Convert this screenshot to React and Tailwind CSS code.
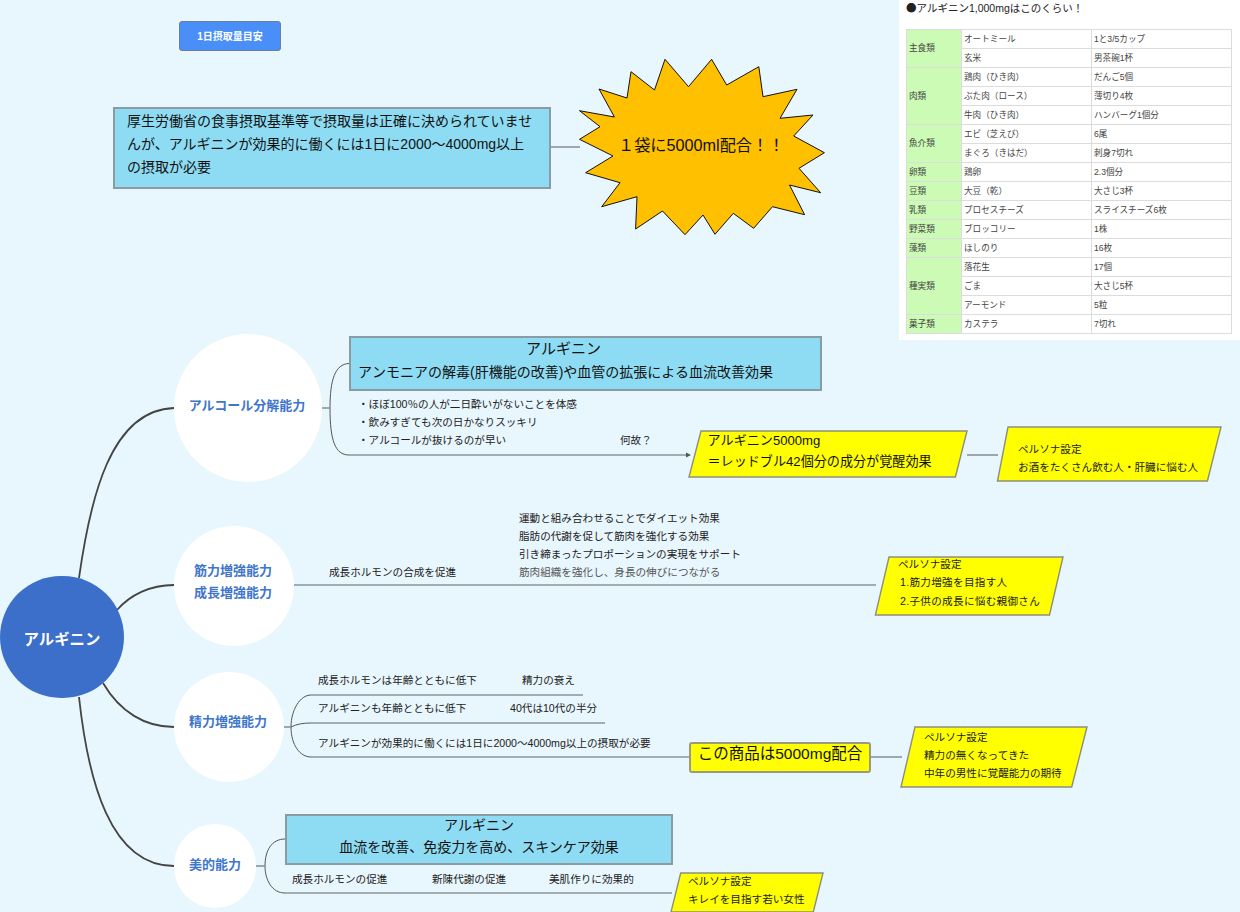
const foods = [
  ['主食類', 2, 'オートミール', '1と3/5カップ'],
  [null, 0, '玄米', '男茶碗1杯'],
  ['肉類', 3, '鶏肉（ひき肉）', 'だんご5個'],
  [null, 0, 'ぶた肉（ロース）', '薄切り4枚'],
  [null, 0, '牛肉（ひき肉）', 'ハンバーグ1個分'],
  ['魚介類', 2, 'エビ（芝えび）', '6尾'],
  [null, 0, 'まぐろ（きはだ）', '刺身7切れ'],
  ['卵類', 1, '鶏卵', '2.3個分'],
  ['豆類', 1, '大豆（乾）', '大さじ3杯'],
  ['乳類', 1, 'プロセスチーズ', 'スライスチーズ6枚'],
  ['野菜類', 1, 'ブロッコリー', '1株'],
  ['藻類', 1, 'ほしのり', '16枚'],
  ['種実類', 3, '落花生', '17個'],
  [null, 0, 'ごま', '大さじ5杯'],
  [null, 0, 'アーモンド', '5粒'],
  ['菓子類', 1, 'カステラ', '7切れ'],
];

const burst =
  '711.6,59.3 726.7,85 758.8,66.7 763,96.7 797,89.3 780,118.3 813,115 793.7,136 824.4,152.7 799,168.3 820.6,192.7 789.5,185 804.6,214.7 772.5,206.7 753.6,228.3 733.3,213.3 715,234.3 703,215 685,234.7 662.5,211 635.6,229 637,196.7 601.7,206.7 620,182.7 585.6,172.7 613,156 579.5,139.3 600,126.7 579.5,110.7 614.4,117 599,89 627,98 631,71.7 654.5,90 665,59.3 688.5,86.7';

// a stack of small text on the canvas, 18px per line
function Notes({ className, children }) {
  return (
    <div className={'absolute flex flex-col whitespace-nowrap text-[10.6px] leading-[18px] text-[#222] ' + className}>
      {children}
    </div>
  );
}

function Topic({ className, children }) {
  return (
    <div className={'absolute flex flex-col items-center justify-center rounded-full bg-white text-[13px] font-bold leading-[22px] text-[#3f76cc] ' + className}>
      {children}
    </div>
  );
}

function FoodTable() {
  return (
    <div className="absolute left-[899px] top-0 h-[340px] w-[341px] bg-white px-[7px]">
      <div className="h-[29px] pt-px text-[10.5px] leading-[14px] text-[#222]">
        <span className="font-['Noto_Sans_CJK_JP']">●</span>アルギニン1,000mgはこのくらい！
      </div>
      <table className="w-[325px] table-fixed border-collapse text-[8.6px] text-[#444]">
        <colgroup>
          <col className="w-[55px]" />
          <col className="w-[130px]" />
          <col className="w-[140px]" />
        </colgroup>
        <tbody>
          {foods.map((row) => (
            <tr key={row[2]} className="h-[19px]">
              {row[0] && (
                <td rowSpan={row[1]} className="border border-[#dcdcdc] bg-[#ccfbb5] px-[2px] py-0 leading-none">
                  {row[0]}
                </td>
              )}
              <td className="border border-[#dcdcdc] px-[2px] py-0 leading-none">{row[2]}</td>
              <td className="border border-[#dcdcdc] px-[2px] py-0 leading-none">{row[3]}</td>
            </tr>
          ))}
        </tbody>
      </table>
    </div>
  );
}

export default function App() {
  return (
    <div lang="ja" className="relative h-[912px] w-[1240px] overflow-hidden bg-[#e8f6fd] font-['Liberation_Sans','Noto_Sans_CJK_JP',sans-serif]">
      <svg className="absolute inset-0" width="1240" height="912" fill="none">
        {/* root branches */}
        <g stroke="#444" strokeWidth="1.8">
          <path d="M79 578 C90 500 110 410 174 408" />
          <path d="M117 610 C130 595 150 585 174 585" />
          <path d="M103 683 C120 712 145 727 174 727" />
          <path d="M79 697 C88 780 110 866 174 866" />
        </g>
        {/* thin brackets */}
        <g stroke="#555" strokeWidth="1">
          <path d="M330 408 C330 380 335 364 349 363.5" />
          <path d="M330 408 C330 440 335 455 349 455" />
          <path d="M291 727 C291 710 300 695 311 695" />
          <path d="M291 727 C297 724 303 723 311 723" />
          <path d="M291 727 C291 745 300 757 311 757" />
          <path d="M265 866 C265 850 272 839 285 839" />
          <path d="M265 866 C265 880 272 893 285 893" />
        </g>
        {/* gray connectors */}
        <g stroke="#8b9499" strokeWidth="1.6">
          <path d="M551 147 H580" />
          <path d="M322 408 H330" />
          <path d="M349 455 H688" />
          <path d="M967 455 H998" />
          <path d="M294 585 H876" />
          <path d="M284 727 H291" />
          <path d="M311 695 H583" />
          <path d="M311 723 H605" />
          <path d="M311 757 H690" />
          <path d="M871 757 H902" />
          <path d="M256 866 H265" />
          <path d="M285 893 H672" />
        </g>
        <path d="M686 452.5 L691 455 L686 457.5 Z" fill="#555" />
        <polygon points={burst} fill="#ffc000" stroke="#111" strokeWidth="1" />
        {/* parallelograms */}
        <g fill="#ffff00" stroke="#8e8e7c" strokeWidth="1.4">
          <polygon points="701,431 967,431 955.4,477 689,477" />
          <polygon points="1008,427 1221,427 1207.4,481 997.5,481" />
          <polygon points="889,557 1063,557 1049.5,615 875.4,615" />
          <polygon points="915,727 1087,727 1071.7,787 901,787" />
          <polygon points="680.7,873 823,873 813.3,912 671,912" />
        </g>
      </svg>

      <div className="absolute left-[179px] top-[21px] flex h-[30px] w-[102px] items-center justify-center rounded-[3px] border border-[#6a7f98] bg-[#4a8ff8] text-[10px] font-bold text-white">
        1日摂取量目安
      </div>

      <div className="absolute left-[113px] top-[107px] h-[82px] w-[438px] border-2 border-[#8a9ba3] bg-[#8edcf3] pl-[12px] pt-[1px] text-[14px] leading-[23px] text-[#111]">
        厚生労働省の食事摂取基準等で摂取量は正確に決められていませ
        <br />
        んが、アルギニンが効果的に働くには1日に2000〜4000mg以上
        <br />
        の摂取が必要
      </div>
      <div className="absolute left-[618px] top-[134px] whitespace-nowrap text-[16.2px] leading-[22px] text-[#111]">１袋に5000ml配合！！</div>

      <FoodTable />

      <div className="absolute left-0 top-[576px] flex h-[122px] w-[124px] items-center justify-center rounded-full bg-[#3b6fc9] pt-[5px] text-[15.4px] font-bold text-white">
        アルギニン
      </div>

      <Topic className="left-[174px] top-[334px] h-[148px] w-[148px] pb-[4px] pr-[2px]">アルコール分解能力</Topic>
      <Topic className="left-[174px] top-[526px] h-[120px] w-[120px] pb-[8px] pr-[2px]">
        <span>筋力増強能力</span>
        <span>成長増強能力</span>
      </Topic>
      <Topic className="left-[174px] top-[672px] h-[110px] w-[110px] pb-[10px] pr-[2px]">精力増強能力</Topic>
      <Topic className="left-[174px] top-[824px] h-[84px] w-[82px] pb-[2px]">美的能力</Topic>

      <div className="absolute left-[349px] top-[336px] flex h-[55px] w-[473px] flex-col border-2 border-[#8a9ba3] bg-[#8edcf3] text-[#111]">
        <div className="pl-[175px] text-[15px] leading-[21px]">アルギニン</div>
        <div className="pl-[7px] text-[14px] leading-[27px]">アンモニアの解毒(肝機能の改善)や血管の拡張による血流改善効果</div>
      </div>

      <Notes className="left-[358px] top-[395px]">
        <span>・ほぼ100％の人が二日酔いがないことを体感</span>
        <span>・飲みすぎても次の日かなりスッキリ</span>
        <span>・アルコールが抜けるのが早い</span>
      </Notes>
      <Notes className="left-[620px] top-[431px]">何故？</Notes>

      <div className="absolute left-[707.5px] top-[430px] whitespace-nowrap text-[13.1px] leading-[21px] text-[#111]">
        アルギニン5000mg
        <br />
        ＝レッドブル42個分の成分が覚醒効果
      </div>
      <Notes className="left-[1018px] top-[440px]">
        <span>ペルソナ設定</span>
        <span>お酒をたくさん飲む人・肝臓に悩む人</span>
      </Notes>

      <Notes className="left-[519px] top-[509px]">
        <span>運動と組み合わせることでダイエット効果</span>
        <span>脂肪の代謝を促して筋肉を強化する効果</span>
        <span>引き締まったプロポーションの実現をサポート</span>
        <span className="text-[#555]">筋肉組織を強化し、身長の伸びにつながる</span>
      </Notes>
      <Notes className="left-[329px] top-[563px]">成長ホルモンの合成を促進</Notes>

      <Notes className="left-[898px] top-[555px]">
        <span>ペルソナ設定</span>
        <span className="pl-[2px] tracking-[0.3px]">1.筋力増強を目指す人</span>
        <span className="pl-[2px] pt-px tracking-[0.3px]">2.子供の成長に悩む親御さん</span>
      </Notes>

      <Notes className="left-[318px] top-[671px] gap-[10px]">
        <div className="flex">
          <span className="w-[204px]">成長ホルモンは年齢とともに低下</span>
          <span>精力の衰え</span>
        </div>
        <div className="flex">
          <span className="w-[192px]">アルギニンも年齢とともに低下</span>
          <span>40代は10代の半分</span>
        </div>
        <div className="pt-[7px]">アルギニンが効果的に働くには1日に2000〜4000mg以上の摂取が必要</div>
      </Notes>

      <div className="absolute left-[689px] top-[742px] flex h-[31px] w-[182px] items-center justify-center rounded-[3px] border-2 border-[#9a9a80] bg-[#ffff00] pb-[7px] text-[15.5px] text-[#111]">
        この商品は5000mg配合
      </div>
      <Notes className="left-[924px] top-[728px]">
        <span>ペルソナ設定</span>
        <span>精力の無くなってきた</span>
        <span>中年の男性に覚醒能力の期待</span>
      </Notes>

      <div className="absolute left-[285px] top-[814px] h-[51px] w-[388px] border-2 border-[#8a9ba3] bg-[#8edcf3] text-center text-[#111]">
        <div className="text-[14px] leading-[19px]">アルギニン</div>
        <div className="pt-[1px] text-[14px] leading-[23px]">血流を改善、免疫力を高め、スキンケア効果</div>
      </div>
      <Notes className="left-[292px] top-[870px] !flex-row">
        <span className="w-[140px]">成長ホルモンの促進</span>
        <span className="w-[117px]">新陳代謝の促進</span>
        <span>美肌作りに効果的</span>
      </Notes>

      <Notes className="left-[688px] top-[872px]">
        <span>ペルソナ設定</span>
        <span>キレイを目指す若い女性</span>
      </Notes>
    </div>
  );
}
